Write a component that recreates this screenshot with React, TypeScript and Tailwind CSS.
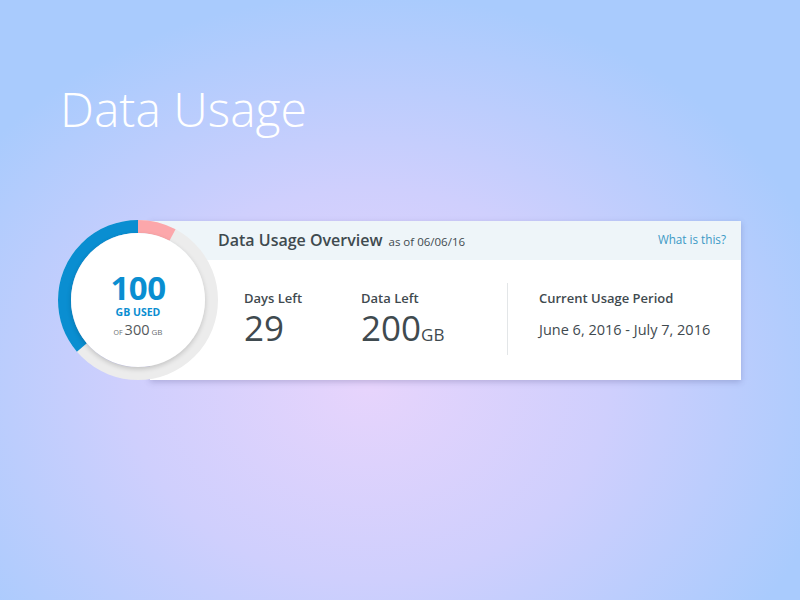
import React from 'react';

const font = { fontFamily: '"Open Sans", "Liberation Sans", sans-serif' };

function UsageRing() {
  const r = 73.5;
  const c = 2 * Math.PI * r;
  const used = 130 / 360;
  const over = 28 / 360;
  return (
    <div className="relative z-10 w-[160px] h-[160px] shrink-0">
      <svg width="160" height="160" viewBox="0 0 160 160" className="absolute inset-0">
        <circle cx="80" cy="80" r={r} fill="none" stroke="#ececec" strokeWidth="13" />
        {/* blue: counterclockwise from top */}
        <circle
          cx="80"
          cy="80"
          r={r}
          fill="none"
          stroke="#0a8ed1"
          strokeWidth="13"
          strokeDasharray={`${c * used} ${c}`}
          transform="rotate(-90 80 80) scale(1 -1) translate(0 -160)"
        />
        {/* pink: clockwise from top */}
        <circle
          cx="80"
          cy="80"
          r={r}
          fill="none"
          stroke="#fca7ab"
          strokeWidth="13"
          strokeDasharray={`${c * over} ${c}`}
          transform="rotate(-90 80 80)"
        />
      </svg>
      <div className="absolute left-[13px] top-[13px] w-[134px] h-[134px] rounded-full bg-white shadow-[0_2px_5px_rgba(0,0,0,0.18)] flex flex-col items-center pt-[38px]">
        <div className="text-[33px] leading-[33px] font-bold text-[#0a8ed1] tracking-[-0.5px]">100</div>
        <div className="text-[10.5px] leading-[14px] font-bold text-[#0a8ed1] mt-[1px]">GB USED</div>
        <div className="flex items-baseline text-[#6b6f72] mt-[3px]">
          <span className="text-[7px] mr-[2px]">OF</span>
          <span className="text-[14.5px] leading-[16px] text-[#55595c]">300</span>
          <span className="text-[8px] ml-[2px]">GB</span>
        </div>
      </div>
    </div>
  );
}

export default function App() {
  return (
    <div
      style={font}
      className="w-[800px] h-[600px] overflow-hidden bg-[radial-gradient(ellipse_60%_65%_at_46%_64%,#e7d4fc_0%,#cfcffd_50%,#a9cbfd_100%)]"
    >
      <h1 className="pt-[85px] pl-[60px] text-[48px] leading-[48px] font-light text-white">Data Usage</h1>

      <div className="flex items-center mt-[87px] ml-[58px]">
        <UsageRing />
        <div className="-ml-[68px] w-[591px] h-[159px] bg-white shadow-[0_2px_6px_rgba(60,60,120,0.25)] flex flex-col">
          <div className="h-[39px] bg-[#eef5f9] flex items-center justify-between pl-[68px] pr-[15px]">
            <div className="flex items-baseline gap-[6px] text-[#3f4a4f]">
              <span className="text-[16px] font-semibold">Data Usage Overview</span>
              <span className="text-[11.5px]">as of 06/06/16</span>
            </div>
            <span className="text-[11.7px] text-[#3c9ac6]">What is this?</span>
          </div>
          <div className="flex-1 flex items-start pt-[29px] pl-[94px] text-[#3f4a4f]">
            <div className="w-[117px]">
              <div className="text-[13px] font-semibold leading-[18px]">Days Left</div>
              <div className="text-[35px] leading-[40px] mt-[1px]">29</div>
            </div>
            <div className="w-[146px]">
              <div className="text-[13px] font-semibold leading-[18px]">Data Left</div>
              <div className="text-[35px] leading-[40px] mt-[1px]">
                200<span className="text-[17px]">GB</span>
              </div>
            </div>
            <div className="w-px h-[72px] -mt-[6px] bg-[#e3e6e8]" />
            <div className="pl-[31px]">
              <div className="text-[13px] font-semibold leading-[18px]">Current Usage Period</div>
              <div className="text-[14.5px] leading-[20px] mt-[13px]">June 6, 2016 - July 7, 2016</div>
            </div>
          </div>
        </div>
      </div>
    </div>
  );
}
